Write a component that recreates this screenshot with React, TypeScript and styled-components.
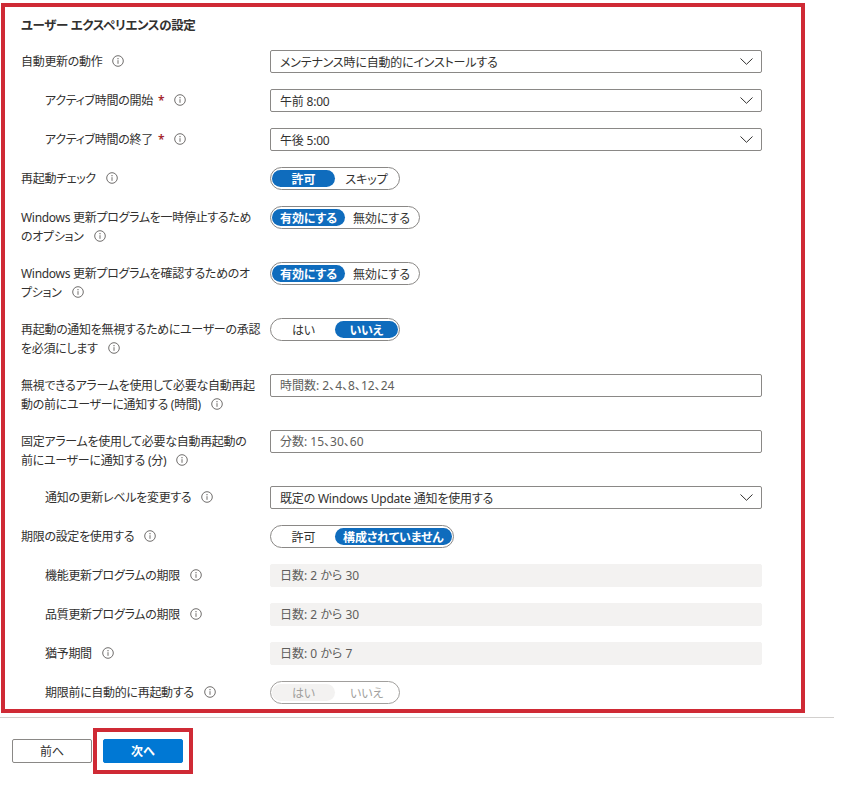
import React from 'react';
import styled, { createGlobalStyle } from 'styled-components';

const GlobalStyle = createGlobalStyle`
  html, body {
    margin: 0;
    padding: 0;
    background: #ffffff;
  }
  body {
    font-family: "Noto Sans", "Noto Sans CJK JP", sans-serif;
    font-feature-settings: "palt" 1;
    font-variant-east-asian: proportional-width;
    color: #323130;
    font-size: 12px;
  }
  * {
    box-sizing: border-box;
  }
`;

const HighlightFrame = styled.section`
  width: 804px;
  margin: 3px 0 0 1px;
  border: 4px solid #cf2a35;
  padding: 9px 0 5px 16px;
`;

const Title = styled.h2`
  margin: 0 0 15px;
  font-size: 12.5px;
  line-height: 19px;
  font-weight: 700;
  letter-spacing: -0.4px;
  color: #323130;
`;

const Form = styled.div`
  display: flex;
  flex-direction: column;
  gap: 16px;
`;

const Row = styled.div`
  display: grid;
  grid-template-columns: 241px 492px;
  column-gap: 8px;
  align-items: start;
`;

const Label = styled.div<{ $indent?: boolean }>`
  padding: 2px 0 0 ${(p) => (p.$indent ? '24px' : '0')};
  font-size: 12px;
  line-height: 19px;
  letter-spacing: -0.3px;
  color: #323130;
  white-space: nowrap;

  span {
    display: block;
  }
`;

const Required = styled.em`
  font-style: normal;
  color: #a4262c;
  margin-left: 5px;
  font-weight: 600;
`;

const InfoWrap = styled.i`
  display: inline-block;
  margin-left: 10px;
  width: 12px;
  height: 12px;
  vertical-align: -1px;
`;

const SelectBox = styled.div`
  height: 23px;
  border: 1px solid #8a8886;
  border-radius: 2px;
  display: flex;
  align-items: center;
  justify-content: space-between;
  padding: 0 8px 0 9px;
  font-size: 12px;
  letter-spacing: -0.2px;
  color: #323130;
  background: #fff;
`;

const TextField = styled.input`
  display: block;
  width: 100%;
  height: 23px;
  margin: 0;
  border: 1px solid #8a8886;
  border-radius: 2px;
  padding: 0 9px;
  font: inherit;
  font-size: 12px;
  color: #323130;
  background: #fff;
  outline: none;

  &::placeholder {
    color: #605e5c;
  }

  &:disabled {
    border-color: #f3f2f1;
    background: #f3f2f1;
  }

  &:disabled::placeholder {
    color: #605e5c;
  }
`;

const Pill = styled.div<{ $disabled?: boolean }>`
  display: inline-flex;
  height: 23px;
  padding: 2px 1px;
  border: 1px solid ${(p) => (p.$disabled ? '#a19f9d' : '#8a8886')};
  border-radius: 12px;
  background: #fff;
`;

const Segment = styled.div<{ $active?: boolean; $disabled?: boolean }>`
  min-width: 63px;
  padding: 0 8px;
  height: 17px;
  border-radius: 9px;
  display: flex;
  align-items: center;
  justify-content: center;
  font-size: 12px;
  letter-spacing: -0.1px;
  font-weight: ${(p) => (p.$active && !p.$disabled ? 700 : 400)};
  color: ${(p) => (p.$disabled ? '#a19f9d' : p.$active ? '#ffffff' : '#323130')};
  background: ${(p) =>
    p.$disabled && p.$active ? '#f3f2f1' : p.$active ? '#0f6cbd' : 'transparent'};
`;

const Divider = styled.div`
  width: 834px;
  margin-top: 4px;
  border-top: 1px solid #d2d0ce;
`;

const ButtonRow = styled.div`
  display: flex;
  align-items: center;
  padding: 10px 0 0 12px;
`;

const NextHighlight = styled.div`
  margin-left: 1px;
  border: 4px solid #cf2a35;
  padding: 7px 6px;
`;

const Button = styled.button<{ $primary?: boolean }>`
  width: 80px;
  height: 24px;
  margin: 0;
  border-radius: 2px;
  border: 1px solid ${(p) => (p.$primary ? '#0078d4' : '#8a8886')};
  background: ${(p) => (p.$primary ? '#0078d4' : '#ffffff')};
  color: ${(p) => (p.$primary ? '#ffffff' : '#323130')};
  font-family: inherit;
  font-size: 12px;
  font-weight: ${(p) => (p.$primary ? 700 : 400)};
  cursor: pointer;
`;

const InfoIcon = () => (
  <InfoWrap>
    <svg width="12" height="12" viewBox="0 0 12 12">
      <circle cx="6" cy="6" r="5.3" fill="none" stroke="#605e5c" strokeWidth="0.9" />
      <circle cx="6" cy="3.7" r="0.65" fill="#605e5c" />
      <line x1="6" y1="5.2" x2="6" y2="8.8" stroke="#605e5c" strokeWidth="0.9" />
    </svg>
  </InfoWrap>
);

const Chevron = () => (
  <svg width="13" height="7" viewBox="0 0 13 7">
    <polyline points="0.5,0.5 6.5,6.3 12.5,0.5" fill="none" stroke="#323130" strokeWidth="1" />
  </svg>
);

type FieldLabelProps = { lines: string[]; indent?: boolean; required?: boolean };

const FieldLabel = ({ lines, indent, required }: FieldLabelProps) => (
  <Label $indent={indent}>
    {lines.map((line, i) => (
      <span key={i}>
        {line}
        {i === lines.length - 1 && (
          <>
            {required && <Required>*</Required>}
            <InfoIcon />
          </>
        )}
      </span>
    ))}
  </Label>
);

const Select = ({ value }: { value: string }) => (
  <SelectBox>
    <span>{value}</span>
    <Chevron />
  </SelectBox>
);

type ToggleProps = { options: string[]; active: number; disabled?: boolean };

const Toggle = ({ options, active, disabled }: ToggleProps) => (
  <div>
    <Pill $disabled={disabled}>
      {options.map((o, i) => (
        <Segment key={o} $active={i === active} $disabled={disabled}>
          {o}
        </Segment>
      ))}
    </Pill>
  </div>
);

export default function App() {
  return (
    <>
      <GlobalStyle />
      <HighlightFrame>
        <Title>ユーザー エクスペリエンスの設定</Title>
        <Form>
          <Row>
            <FieldLabel lines={['自動更新の動作']} />
            <Select value="メンテナンス時に自動的にインストールする" />
          </Row>
          <Row>
            <FieldLabel lines={['アクティブ時間の開始']} indent required />
            <Select value="午前 8:00" />
          </Row>
          <Row>
            <FieldLabel lines={['アクティブ時間の終了']} indent required />
            <Select value="午後 5:00" />
          </Row>
          <Row>
            <FieldLabel lines={['再起動チェック']} />
            <Toggle options={['許可', 'スキップ']} active={0} />
          </Row>
          <Row>
            <FieldLabel lines={['Windows 更新プログラムを一時停止するため', 'のオプション']} />
            <Toggle options={['有効にする', '無効にする']} active={0} />
          </Row>
          <Row>
            <FieldLabel lines={['Windows 更新プログラムを確認するためのオ', 'プション']} />
            <Toggle options={['有効にする', '無効にする']} active={0} />
          </Row>
          <Row>
            <FieldLabel lines={['再起動の通知を無視するためにユーザーの承認', 'を必須にします']} />
            <Toggle options={['はい', 'いいえ']} active={1} />
          </Row>
          <Row>
            <FieldLabel
              lines={['無視できるアラームを使用して必要な自動再起', '動の前にユーザーに通知する (時間)']}
            />
            <TextField placeholder="時間数: 2、4、8、12、24" />
          </Row>
          <Row>
            <FieldLabel
              lines={['固定アラームを使用して必要な自動再起動の', '前にユーザーに通知する (分)']}
            />
            <TextField placeholder="分数: 15、30、60" />
          </Row>
          <Row>
            <FieldLabel lines={['通知の更新レベルを変更する']} indent />
            <Select value="既定の Windows Update 通知を使用する" />
          </Row>
          <Row>
            <FieldLabel lines={['期限の設定を使用する']} />
            <Toggle options={['許可', '構成されていません']} active={1} />
          </Row>
          <Row>
            <FieldLabel lines={['機能更新プログラムの期限']} indent />
            <TextField disabled placeholder="日数: 2 から 30" />
          </Row>
          <Row>
            <FieldLabel lines={['品質更新プログラムの期限']} indent />
            <TextField disabled placeholder="日数: 2 から 30" />
          </Row>
          <Row>
            <FieldLabel lines={['猶予期間']} indent />
            <TextField disabled placeholder="日数: 0 から 7" />
          </Row>
          <Row>
            <FieldLabel lines={['期限前に自動的に再起動する']} indent />
            <Toggle options={['はい', 'いいえ']} active={0} disabled />
          </Row>
        </Form>
      </HighlightFrame>
      <Divider />
      <ButtonRow>
        <Button>前へ</Button>
        <NextHighlight>
          <Button $primary>次へ</Button>
        </NextHighlight>
      </ButtonRow>
    </>
  );
}
